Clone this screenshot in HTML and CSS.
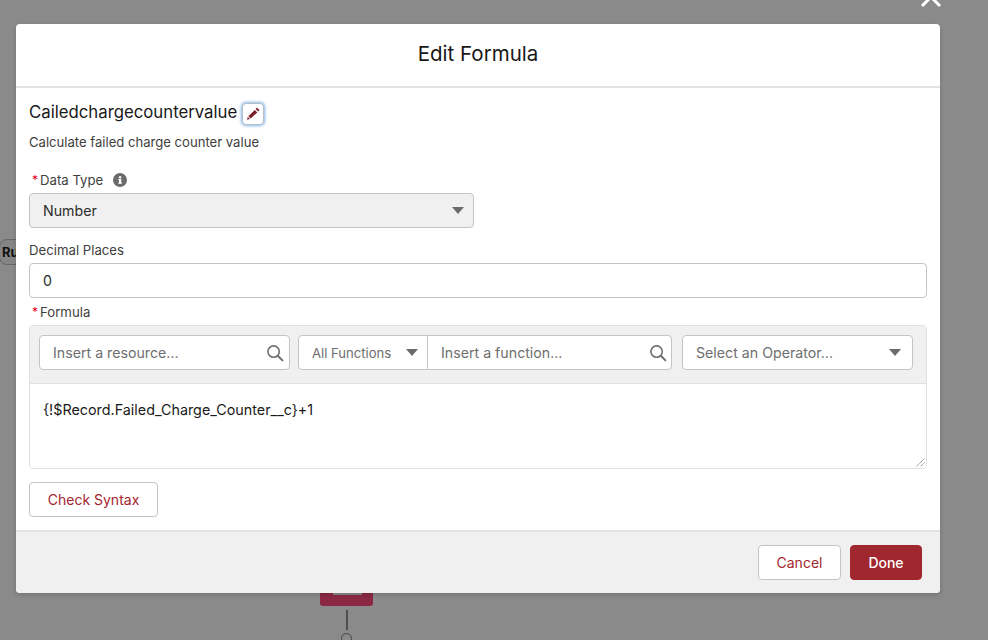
FILE: index.html
```html
<!DOCTYPE html>
<html lang="en">
<head>
<meta charset="utf-8">
<title>Edit Formula</title>
<link rel="stylesheet" href="styles.css">
</head>
<body>
<div class="canvas">
  <div class="pill">Ru</div>
  <div class="node"><div class="node-notch"></div></div>
  <div class="connector"></div>
  <div class="endpoint"></div>
  <svg class="close" width="24" height="24" viewBox="0 0 24 24"><path d="M2 -12L20 6M20 -12L2 6" fill="none" stroke="#fff" stroke-width="3"/></svg>
</div>
<div class="modal">
  <header class="modal-head"><h1 class="modal-title">Edit Formula</h1></header>
  <main class="modal-body">
    <div class="name-row">
      <span class="name">Cailedchargecountervalue</span>
      <button class="edit-btn" aria-label="Edit">
        <svg width="14" height="14" viewBox="0 0 14 14"><path d="M10.6 1.1a.6.6 0 0 1 .8 0l1.7 1.7a.6.6 0 0 1 0 .8l-1 1-2.5-2.5zM8.8 2.9l2.5 2.5-6.6 6.1-2.3-2.3zM1.8 9.8l2.1 2.1-2.9.9z" fill="#7d1f28"/></svg>
      </button>
    </div>
    <p class="desc">Calculate failed charge counter value</p>

    <div class="label label-type"><span class="req">*</span>Data Type
      <svg class="info" width="14" height="14" viewBox="0 0 14 14"><circle cx="7" cy="7" r="7" fill="#6b6b6b"/><rect x="6" y="6" width="2.2" height="4.6" fill="#fff"/><rect x="5.2" y="6" width="1.6" height="1" fill="#fff"/><rect x="5.2" y="9.6" width="3.8" height="1" fill="#fff"/><circle cx="7.1" cy="4.2" r="1.2" fill="#fff"/></svg>
    </div>
    <div class="field select-type"><span>Number</span><span class="caret caret-lg"></span></div>

    <div class="label label-decimal">Decimal Places</div>
    <div class="field decimal"><span>0</span></div>

    <div class="label label-formula"><span class="req">*</span>Formula</div>
    <div class="editor">
      <div class="toolbar">
        <div class="field tool resource">
          <span class="ph">Insert a resource...</span>
          <svg class="search" width="18" height="18" viewBox="0 0 18 18"><circle cx="7.6" cy="7.6" r="5.7" fill="none" stroke="#6f6f6f" stroke-width="1.6"/><path d="M11.8 11.8L16.4 16.4" stroke="#6f6f6f" stroke-width="2" stroke-linecap="round"/></svg>
        </div>
        <div class="combo">
          <div class="field tool functions"><span class="ph ph-small">All Functions</span><span class="caret"></span></div>
          <div class="field tool fn-search">
            <span class="ph">Insert a function...</span>
            <svg class="search" width="18" height="18" viewBox="0 0 18 18"><circle cx="7.6" cy="7.6" r="5.7" fill="none" stroke="#6f6f6f" stroke-width="1.6"/><path d="M11.8 11.8L16.4 16.4" stroke="#6f6f6f" stroke-width="2" stroke-linecap="round"/></svg>
          </div>
        </div>
        <div class="field tool operator"><span class="ph">Select an Operator...</span><span class="caret"></span></div>
      </div>
      <div class="formula">
        <span>{!$Record.Failed_Charge_Counter__c}+1</span>
        <svg class="grip" width="9" height="9" viewBox="0 0 9 9"><path d="M8.5 .5L.5 8.5M8.5 4.5L4.5 8.5" stroke="#777" stroke-width="1" stroke-dasharray="1.2 .6"/></svg>
      </div>
    </div>
    <button class="btn check">Check Syntax</button>
  </main>
  <footer class="modal-foot">
    <button class="btn cancel">Cancel</button>
    <button class="btn done">Done</button>
  </footer>
</div>
</body>
</html>
```
FILE: styles.css
```css
* { box-sizing: border-box; }
html, body { margin: 0; height: 100%; }
body {
  background: #8a8a8a;
  font-family: Inter, "Liberation Sans", sans-serif;
  color: #1a1a1a;
  overflow: hidden;
  position: relative;
}
.canvas { position: absolute; inset: 0; }
.pill {
  position: absolute; left: -1px; top: 239px; width: 40px; height: 26px;
  border: 1px solid #666; border-radius: 8px; background: #858585;
  font-size: 13px; font-weight: 700; line-height: 24px; padding-left: 2px; color: #111;
}
.node { position: absolute; left: 320px; top: 560px; width: 53px; height: 46px; background: #8b2945; border-radius: 3px; }
.node-notch { position: absolute; left: 13px; bottom: 11px; width: 29px; height: 10px; background: #8a8a8a; }
.connector { position: absolute; left: 345.5px; top: 610px; width: 2px; height: 20px; background: #4f4f4f; }
.endpoint { position: absolute; left: 341px; top: 633px; width: 11px; height: 11px; border: 1px solid #444; border-radius: 50%; }
.close { position: absolute; left: 920px; top: 0; overflow: hidden; }

.modal {
  position: absolute; left: 16px; top: 24px; width: 924px; height: 569px;
  background: #fff; border-radius: 4px; overflow: hidden;
  display: flex; flex-direction: column;
  box-shadow: 0 2px 4px rgba(0,0,0,.16);
}
.modal-head { height: 64px; border-bottom: 2px solid #e2e2e2; display: flex; align-items: center; justify-content: center; flex: none; padding-bottom: 3px; }
.modal-title { margin: 0; font-size: 20.5px; font-weight: 400; line-height: 26px; color: #181818; }
.modal-body { flex: 1; padding: 0 13px; display: flex; flex-direction: column; align-items: flex-start; }
.name-row { display: flex; align-items: flex-start; height: 28px; margin-top: 14px; }
.name { font-size: 16.75px; line-height: 20px; color: #181818; }
.edit-btn {
  width: 22px; height: 22px; margin: 1px 0 0 5px; padding: 0;
  background: #fff; border: 1px solid #b5bfc9; border-radius: 4px;
  box-shadow: 0 0 3px 1px #87b5e6;
  display: flex; align-items: center; justify-content: center;
}
.desc { margin: 4px 0 0; font-size: 13.1px; line-height: 16px; color: #3e3e3c; height: 16px; }
.label { font-size: 13.2px; line-height: 16px; color: #3e3e3c; display: flex; align-items: center; }
.req { color: #ea001e; width: 8px; margin-left: 3px; font-size: 12px; }
.label-type { margin-top: 22px; height: 16px; }
.info { margin-left: 10px; }
.field {
  background: #fff; border: 1px solid #c4c4c4; border-radius: 4px;
  display: flex; align-items: center; justify-content: space-between;
  font-size: 14.2px; color: #2b2b2b;
}
.select-type { width: 445px; height: 35px; margin-top: 5px; background: #f0f0f0; padding: 0 9px 0 13px; }
.label-decimal { margin-top: 14px; }
.decimal { width: 898px; height: 35px; margin-top: 5px; padding: 0 13px; }
.label-formula { margin-top: 6px; }
.caret { width: 0; height: 0; border-left: 6px solid transparent; border-right: 6px solid transparent; border-top: 7px solid #6b6b6b; flex: none; }
.caret-lg { border-left-width: 6.5px; border-right-width: 6.5px; }
.editor { width: 898px; margin-top: 5px; border: 1px solid #e0e0e0; border-radius: 4px; overflow: hidden; }
.toolbar { background: #f0f0f0; height: 58px; padding: 9px 9px; display: flex; gap: 8px; border-bottom: 1px solid #e0e0e0; }
.tool { height: 35px; }
.ph { font-size: 14.2px; color: #6e6e6e; }
.ph-small { font-size: 13.1px; }
.resource { width: 251px; padding: 0 5px 0 13px; }
.combo { display: flex; }
.functions { width: 130px; padding: 0 9px 0 13px; border-radius: 4px 0 0 4px; }
.fn-search { width: 245px; margin-left: -1px; padding: 0 4px 0 13px; border-radius: 0 4px 4px 0; }
.operator { width: 231px; padding: 0 11px 0 13px; margin-left: 2px; }
.search { flex: none; }
.formula { height: 84px; padding: 18px 13px; font-size: 14.35px; line-height: 16px; color: #1a1a1a; background: #fff; position: relative; }
.grip { position: absolute; right: 1px; bottom: 1px; }
.btn {
  font-family: inherit; font-size: 14px; border-radius: 4px; height: 35px;
  background: #fff; border: 1px solid #c4c4c4; color: #a4262f; padding: 0;
}
.check { width: 129px; margin-top: 13px; }
.modal-foot {
  height: 63px; flex: none; background: #f0f0f0; border-top: 2px solid #e2e2e2;
  display: flex; justify-content: flex-end; align-items: flex-start; gap: 9px; padding: 13px 18px 0 0;
}
.cancel { width: 83px; }
.done { width: 72px; background: #a1272f; border-color: #a1272f; color: #fff; font-weight: 500; }
```
